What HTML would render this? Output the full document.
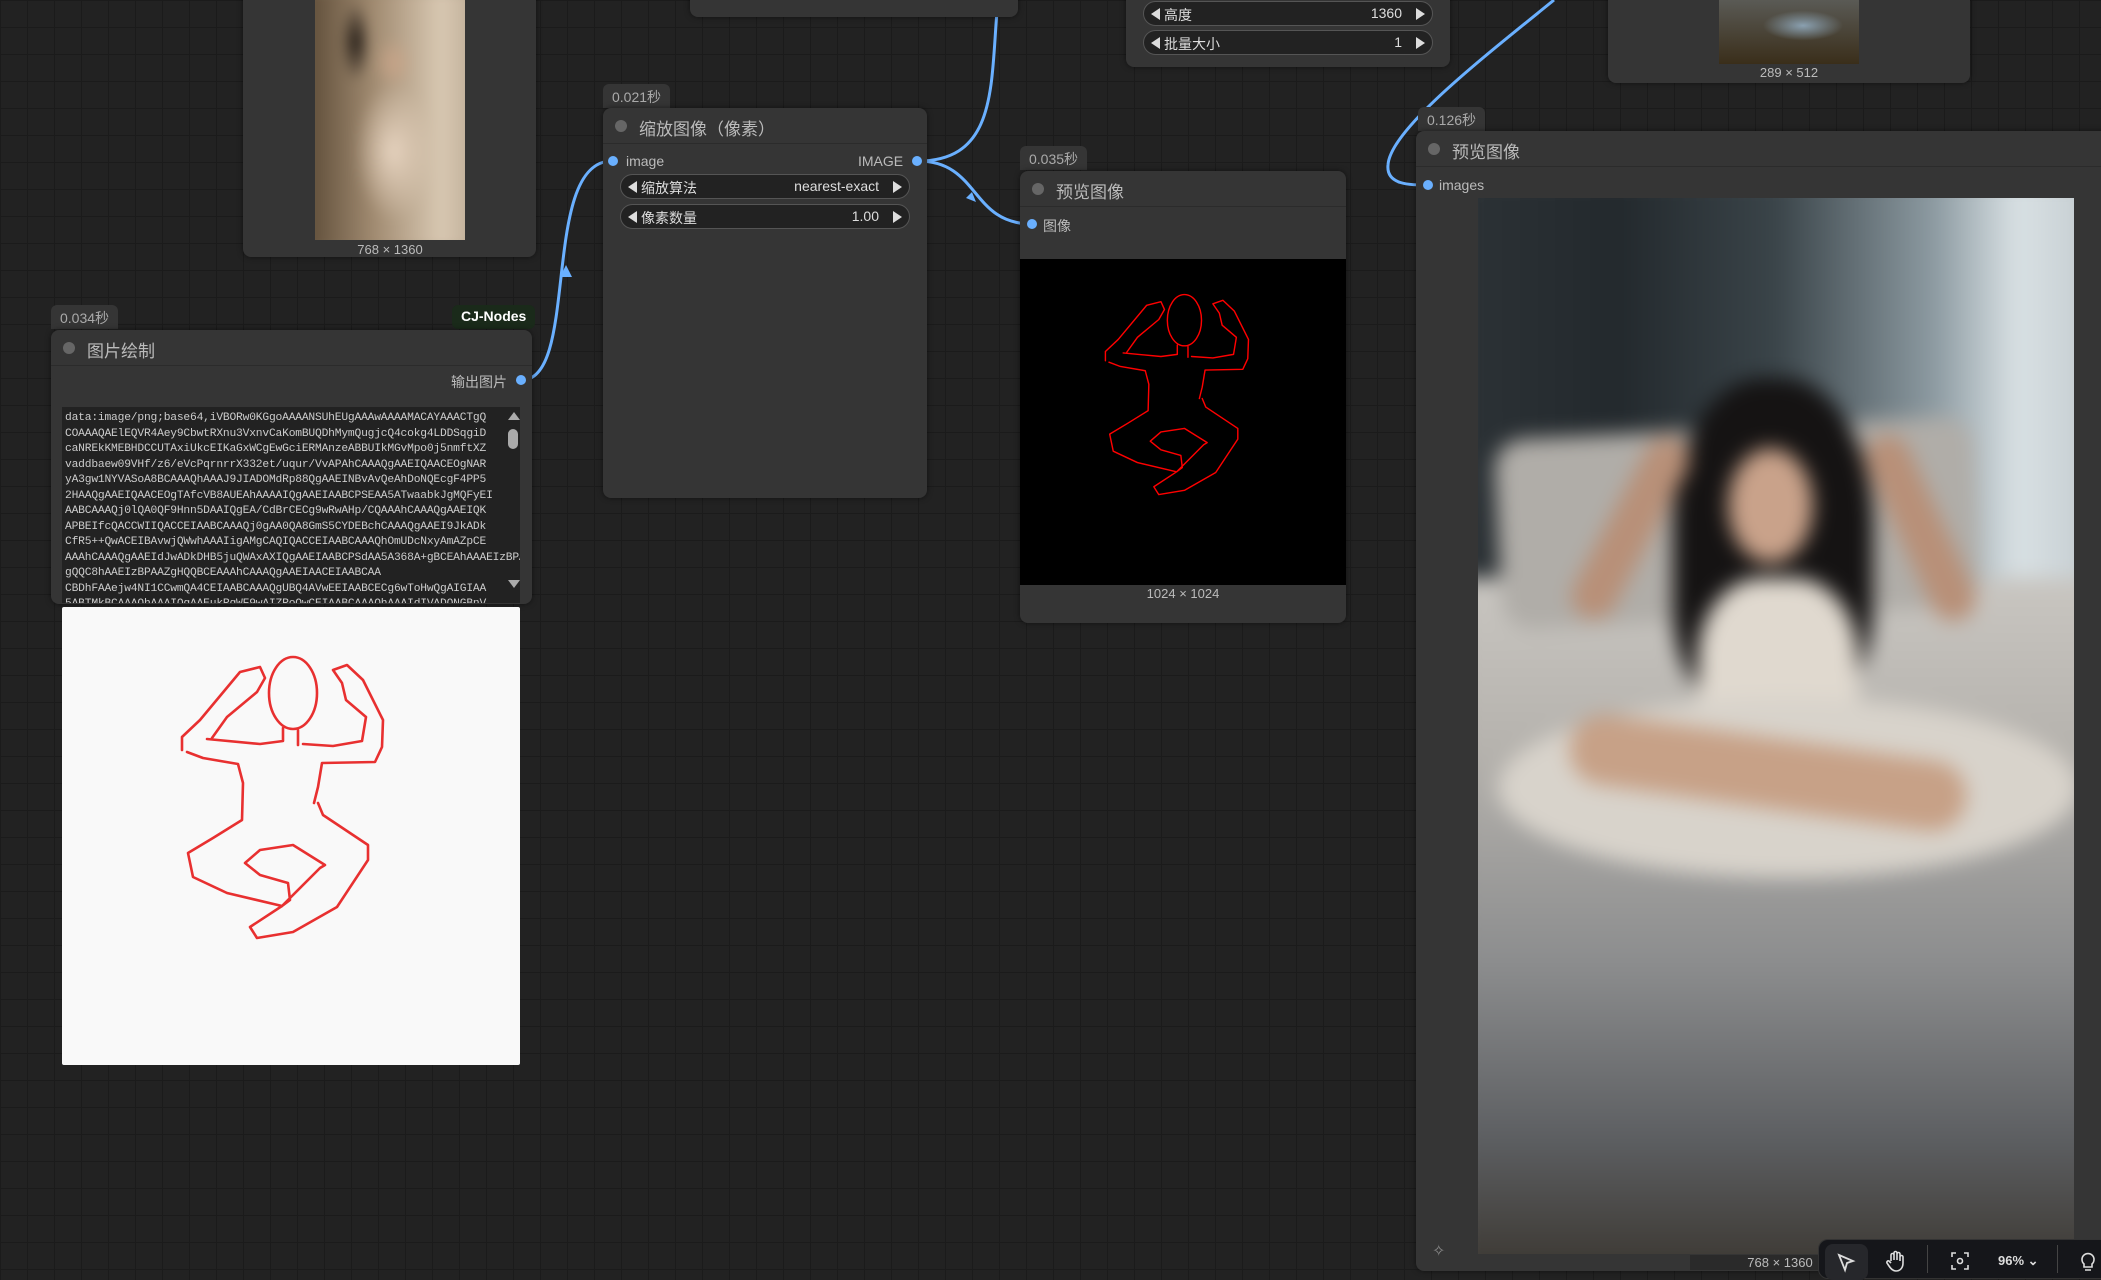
<!DOCTYPE html>
<html><head><meta charset="utf-8"><style>
*{margin:0;padding:0;box-sizing:border-box}
body{width:2101px;height:1274px;overflow:hidden;position:relative;background:#222;
background-image:linear-gradient(#1b1b1b 1px,transparent 1px),linear-gradient(90deg,#1b1b1b 1px,transparent 1px);
background-size:27px 27px;font-family:"Liberation Sans","Noto Sans CJK SC",sans-serif;color:#ccc}
.node{position:absolute;background:#353535;border-radius:8px;box-shadow:0 0 6px rgba(0,0,0,.5)}
.hdr{position:absolute;left:0;right:0;top:0;border-bottom:1px solid #2b2b2b;color:#bbb;font-size:17px}
.dot{position:absolute;width:12px;height:12px;border-radius:50%;background:#666}
.badge{position:absolute;background:#353535;color:#aaa;font-size:14px;border-radius:6px 6px 0 0;padding:3px 9px;height:24px}
.slot{position:absolute;width:10px;height:10px;border-radius:50%;background:#6ab0ff}
.lbl{position:absolute;font-size:14px;color:#bbb}
.wd{position:absolute;height:25px;background:#222;border:1px solid #555;border-radius:13px;font-size:14px;color:#ddd}
.wd .l{position:absolute;left:20px;top:3px}
.wd .v{position:absolute;right:30px;top:3px}
.wd:before{content:"";position:absolute;left:7px;top:6px;border:6px solid transparent;border-right:9px solid #ddd;border-left:0}
.wd:after{content:"";position:absolute;right:7px;top:6px;border:6px solid transparent;border-left:9px solid #ddd;border-right:0}
.cap{position:absolute;font-size:13px;color:#bbb;text-align:center}
.ta{position:absolute;left:62px;top:407px;width:458px;height:196px;background:#222;overflow:hidden;font-family:"Liberation Mono",monospace;font-size:11.3px;line-height:15.5px;color:#ccc;padding:4px 26px 0 3px;white-space:pre;letter-spacing:-0.2px}
</style></head><body>
<svg width="0" height="0" style="position:absolute"><defs><symbol id="sk" viewBox="62 607 458 458"><g fill="none" stroke-linejoin="round" stroke-linecap="round">
<ellipse cx="293" cy="693" rx="24" ry="36"/>
<path d="M182 750L182 737L200 720L240 672L260 667L265 678L257 692L227 717L212 738"/>
<path d="M207 739L260 744L283 741L283 728"/>
<path d="M298 730L298 745"/>
<path d="M303 744L333 746L362 741L366 717L346 700L342 683L333 670L347 665L363 680L383 720L382 747L375 762L322 763L318 787L314 803"/>
<path d="M187 752L203 758L238 764L243 783L242 820L213 838L188 853L193 877L227 893L282 906"/>
<path d="M318 803L323 815L368 845L368 860L337 907L293 932L257 938L250 927L282 906L320 868L325 865L293 845L260 850L245 863L260 875L288 883L290 900L282 906"/>
</g></symbol></defs></svg>

<!-- links -->
<svg style="position:absolute;left:0;top:0" width="2101" height="1274"><g fill="none" stroke="#6ab0ff" stroke-width="3">
<path d="M522 380C580 380 540 161 612 161"/>
<path d="M918 161C980 161 970 224 1032 224"/>
<path d="M918 161C1000 161 990 80 998 0"/>
<path d="M1554 0C1480 60 1390 130 1388 165C1386 185 1410 185 1427 185"/>
</g><path d="M566 265l6 12h-12z" fill="#6ab0ff"/><path d="M976 202l-4 -10 -6 6z" fill="#6ab0ff"/></svg>

<!-- top left image node -->
<div class="node" style="left:243px;top:-10px;width:293px;height:267px"></div>
<div style="position:absolute;left:315px;top:0;width:150px;height:240px;overflow:hidden;background:#8a7660"><div style="position:absolute;inset:-10px;filter:blur(6px);background:radial-gradient(ellipse 20px 26px at 52% 28%,#c8a488,transparent),radial-gradient(ellipse 14px 40px at 30% 20%,#1a1410,transparent),radial-gradient(ellipse 40px 70px at 52% 62%,#e6d3bf,transparent),linear-gradient(90deg,#5b4a36,#a08a70 40%,#d8c8b2 80%,#bfae98)"></div></div>
<div class="cap" style="left:315px;top:242px;width:150px">768 × 1360</div>

<!-- top center node -->
<div class="node" style="left:690px;top:-10px;width:328px;height:27px"></div>

<!-- top right widgets node -->
<div class="node" style="left:1126px;top:-10px;width:324px;height:77px"></div>
<div class="wd" style="left:1143px;top:1px;width:290px"><span class="l">高度</span><span class="v">1360</span></div>
<div class="wd" style="left:1143px;top:30px;width:290px"><span class="l">批量大小</span><span class="v">1</span></div>

<!-- top far right node -->
<div class="node" style="left:1608px;top:-10px;width:362px;height:93px"></div>
<div style="position:absolute;left:1719px;top:0;width:140px;height:64px;background:radial-gradient(ellipse 40px 15px at 60% 40%,#8aa0b0,transparent),linear-gradient(#5a5a55,#3a2e1a)"></div>
<div class="cap" style="left:1719px;top:65px;width:140px">289 × 512</div>

<!-- scale node -->
<div class="badge" style="left:603px;top:84px">0.021秒</div>
<div class="node" style="left:603px;top:108px;width:324px;height:390px"><div class="hdr" style="height:36px"><div class="dot" style="left:12px;top:12px"></div><span style="position:absolute;left:36px;top:7px">缩放图像（像素）</span></div></div>
<div class="slot" style="left:608px;top:156px"></div><div class="lbl" style="left:626px;top:153px">image</div>
<div class="lbl" style="left:858px;top:153px">IMAGE</div><div class="slot" style="left:912px;top:156px"></div>
<div class="wd" style="left:620px;top:174px;width:290px"><span class="l">缩放算法</span><span class="v">nearest-exact</span></div>
<div class="wd" style="left:620px;top:204px;width:290px"><span class="l">像素数量</span><span class="v">1.00</span></div>

<!-- middle preview -->
<div class="badge" style="left:1020px;top:146px">0.035秒</div>
<div class="node" style="left:1020px;top:171px;width:326px;height:452px"><div class="hdr" style="height:36px"><div class="dot" style="left:12px;top:12px"></div><span style="position:absolute;left:36px;top:7px">预览图像</span></div></div>
<div class="slot" style="left:1027px;top:219px"></div><div class="lbl" style="left:1043px;top:216px">图像</div>
<div style="position:absolute;left:1020px;top:259px;width:326px;height:326px;background:#000"><svg width="326" height="326" stroke="#f00" stroke-width="2"><use href="#sk"/></svg></div>
<div class="cap" style="left:1020px;top:586px;width:326px">1024 × 1024</div>

<!-- draw node -->
<div class="badge" style="left:51px;top:305px">0.034秒</div>
<div class="badge" style="left:452px;top:305px;background:#1a2a1a;color:#fff;font-weight:bold;border-radius:6px">CJ-Nodes</div>
<div class="node" style="left:51px;top:330px;width:481px;height:274px"><div class="hdr" style="height:36px"><div class="dot" style="left:12px;top:12px"></div><span style="position:absolute;left:36px;top:7px">图片绘制</span></div></div>
<div class="lbl" style="left:451px;top:372px">输出图片</div><div class="slot" style="left:516px;top:375px"></div>
<div class="ta">data:image/png;base64,iVBORw0KGgoAAAANSUhEUgAAAwAAAAMACAYAAACTgQ
COAAAQAElEQVR4Aey9CbwtRXnu3VxnvCaKomBUQDhMymQugjcQ4cokg4LDDSqgiD
caNREkKMEBHDCCUTAxiUkcEIKaGxWCgEwGciERMAnzeABBUIkMGvMpo0j5nmftXZ
vaddbaew09VHf/z6/eVcPqrnrrX332et/uqur/VvAPAhCAAAQgAAEIQAACEOgNAR
yA3gw1NYVASoA8BCAAAQhAAAJ9JIADOMdRp88QgAAEINBvAvQeAhDoNQEcgF4PP5
2HAAQgAAEIQAACEOgTAfcVB8AUEAhAAAAIQgAAEIAABCPSEAA5ATwaabkJgMQFyEI
AABCAAAQj0lQA0QF9Hnn5DAAIQgEA/CdBrCECg9wRwAHp/CQAAAhCAAAQgAAEIQK
APBEIfcQACCWIIQACCEIAABCAAAQj0gAA0QA8GmS5CYDEBchCAAAQgAAEI9JkADk
CfR5++QwACEIBAvwjQWwhAAAIigAMgCAQIQACCEIAABCAAAQhOmUDcNxyAmAZpCE
AAAhCAAAQgAAEIdJwADkDHB5juQWAxAXIQgAAEIAABCPSdAA5A368A+gBCEAhAAAEIzBPAAZ
gQQC8hAAEIzBPAAZgHQQBCEAAAhCAAAQgAAEIAACEIAABCAA
CBDhFAAejw4NI1CCwmQA4CEIAABCAAAQgUBQ4AVwEEIAABCECg6wToHwQgAIGIAA
5ABTMkBCAAAQhAAAIQgAAEukRgWF9wAIZRoQwCEIAABCAAAQhAAAIdIVADONGBnV</div>
<div style="position:absolute;left:508px;top:412px;border:6px solid transparent;border-bottom:8px solid #aaa;border-top:0"></div>
<div style="position:absolute;left:508px;top:429px;width:10px;height:20px;border-radius:5px;background:#aaa"></div>
<div style="position:absolute;left:508px;top:580px;border:6px solid transparent;border-top:8px solid #aaa;border-bottom:0"></div>
<div style="position:absolute;left:62px;top:607px;width:458px;height:458px;background:#f9f9f9;border-radius:2px"><svg width="458" height="458" stroke="#e83030" stroke-width="2.6"><use href="#sk"/></svg></div>

<!-- big preview -->
<div class="badge" style="left:1418px;top:107px">0.126秒</div>
<div class="node" style="left:1416px;top:131px;width:700px;height:1140px"><div class="hdr" style="height:36px"><div class="dot" style="left:12px;top:12px"></div><span style="position:absolute;left:36px;top:7px">预览图像</span></div></div>
<div class="slot" style="left:1423px;top:180px"></div><div class="lbl" style="left:1439px;top:177px">images</div>
<div style="position:absolute;left:1478px;top:198px;width:596px;height:1056px;overflow:hidden;background:#6a6b6b">
<div style="position:absolute;inset:-20px;filter:blur(10px);background:linear-gradient(90deg,#2c3236 0%,#23292d 25%,#3a4449 50%,#8d9ba2 75%,#d9e1e4 88%,#c4ccd0 100%)">
 <div style="position:absolute;left:0;top:400px;width:640px;height:700px;background:linear-gradient(#c9c6c1,#b5b2ad 25%,#8c8d8e 55%,#5d5f62 80%,#3a3630)"></div>
 <div style="position:absolute;left:40px;top:250px;width:480px;height:190px;background:#b0ada8;border-radius:30px;transform:rotate(-3deg)"></div>
 <div style="position:absolute;left:215px;top:200px;width:200px;height:330px;background:#151313;border-radius:45% 45% 30% 30%"></div>
 <div style="position:absolute;left:270px;top:270px;width:85px;height:115px;background:#c9a28a;border-radius:50%"></div>
 <div style="position:absolute;left:150px;top:250px;width:45px;height:200px;background:#b89078;border-radius:30px;transform:rotate(28deg)"></div>
 <div style="position:absolute;left:440px;top:250px;width:45px;height:200px;background:#b89078;border-radius:30px;transform:rotate(-25deg)"></div>
 <div style="position:absolute;left:240px;top:400px;width:160px;height:200px;background:#e0d9cf;border-radius:40% 40% 20% 20%"></div>
 <div style="position:absolute;left:40px;top:520px;width:580px;height:180px;background:#d8d3cb;border-radius:50%"></div>
 <div style="position:absolute;left:110px;top:560px;width:400px;height:70px;background:#c7a187;border-radius:40px;transform:rotate(8deg)"></div>
</div></div>
<div class="cap" style="left:1690px;top:1255px;width:180px;background:#2a2a2a">768 × 1360</div>
<div style="position:absolute;left:1432px;top:1241px;color:#888;font-size:16px">✧</div>

<!-- toolbar -->
<div style="position:absolute;left:1818px;top:1239px;width:300px;height:40px;background:#15161a;border:1px solid #333;border-radius:10px"></div>
<div style="position:absolute;left:1825px;top:1244px;width:43px;height:36px;background:#26272b;border-radius:8px"></div>
<svg style="position:absolute;left:1835px;top:1252px" width="22" height="22" fill="none" stroke="#ddd" stroke-width="1.8"><path d="M4 3l14 6-6 2-2 7z"/></svg>
<svg style="position:absolute;left:1884px;top:1249px" width="24" height="24" fill="none" stroke="#ddd" stroke-width="1.6"><path d="M7 12V6a1.5 1.5 0 013 0v5V4a1.5 1.5 0 013 0v7V5a1.5 1.5 0 013 0v7V8a1.5 1.5 0 013 0v6c0 5-3 8-7 8-3 0-5-2-7-5l-2-3a1.5 1.5 0 012-2l2 2"/></svg>
<div style="position:absolute;left:1927px;top:1245px;width:1px;height:28px;background:#444"></div>
<svg style="position:absolute;left:1950px;top:1251px" width="20" height="20" fill="none" stroke="#ddd" stroke-width="1.6"><path d="M2 6V2h4M14 2h4v4M18 14v4h-4M6 18H2v-4"/><circle cx="10" cy="10" r="2.5"/></svg>
<div style="position:absolute;left:1998px;top:1253px;font-size:13px;color:#ddd;font-weight:bold">96% ⌄</div>
<div style="position:absolute;left:2057px;top:1245px;width:1px;height:28px;background:#444"></div>
<svg style="position:absolute;left:2080px;top:1250px" width="16" height="24" fill="none" stroke="#ddd" stroke-width="1.6"><path d="M4 14a6 6 0 118 0v3H4z M5 20h6"/></svg>
</body></html>
